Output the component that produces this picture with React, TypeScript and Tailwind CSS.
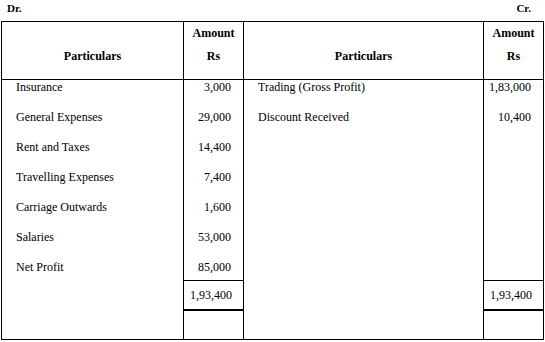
import React from "react";

const left = [
  ["Insurance", "3,000"],
  ["General Expenses", "29,000"],
  ["Rent and Taxes", "14,400"],
  ["Travelling Expenses", "7,400"],
  ["Carriage Outwards", "1,600"],
  ["Salaries", "53,000"],
  ["Net Profit", "85,000"],
];
const right = [
  ["Trading (Gross Profit)", "1,83,000"],
  ["Discount Received", "10,400"],
];

function PartCol({ items, w, border }: { items: string[]; w: string; border: boolean }) {
  return (
    <div className={`flex flex-col ${w} ${border ? "border-l border-black" : ""}`}>
      <div className="h-[58px] shrink-0 border-b border-black flex items-end justify-center pb-[15px] font-bold leading-4">
        Particulars
      </div>
      <div className="flex flex-col pl-[14px] -mt-[1px]">
        {items.map((t) => (
          <div key={t} className="h-[30px] shrink-0 leading-4">
            {t}
          </div>
        ))}
      </div>
    </div>
  );
}

function AmtCol({ items, total }: { items: string[]; total: string }) {
  return (
    <div className="flex flex-col w-[60px] border-l border-black">
      <div className="h-[58px] shrink-0 border-b border-black flex flex-col items-center pt-[2px] font-bold leading-4">
        <div className="mt-[1px]">Amount</div>
        <div className="mt-[7px]">Rs</div>
      </div>
      <div className="h-[200px] shrink-0 flex flex-col items-end pr-[12px] -mt-[1px]">
        {items.map((t, i) => (
          <div key={i} className="h-[30px] shrink-0 leading-4">
            {t}
          </div>
        ))}
      </div>
      <div className="h-[31px] shrink-0 mt-[1px] border-t border-b-2 border-black flex items-center justify-end pr-[11px] leading-4">
        {total}
      </div>
      <div className="flex-1" />
    </div>
  );
}

export default function App() {
  return (
    <div className="w-[545px] h-[342px] bg-white text-black text-[12px] font-['Liberation_Serif','Times_New_Roman',serif]">
      <div className="h-[21px] flex justify-between items-start pl-[7px] pr-[14px] font-bold text-[11px] leading-4">
        <span>Dr.</span>
        <span>Cr.</span>
      </div>
      <div className="ml-[1px] w-[543px] h-[319px] border border-black flex">
        <PartCol items={left.map((r) => r[0])} w="w-[181px]" border={false} />
        <AmtCol items={left.map((r) => r[1])} total="1,93,400" />
        <PartCol items={right.map((r) => r[0])} w="w-[240px]" border={true} />
        <AmtCol items={right.map((r) => r[1])} total="1,93,400" />
      </div>
    </div>
  );
}
